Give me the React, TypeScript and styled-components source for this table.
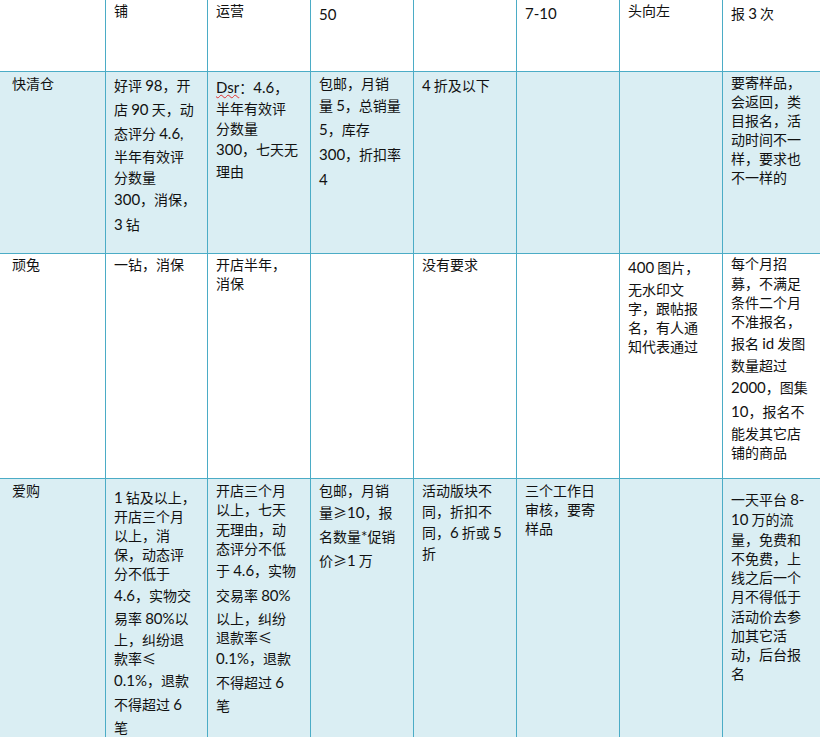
import React from 'react';
import styled, { createGlobalStyle } from 'styled-components';

const GlobalStyle = createGlobalStyle`
html, body {
  margin: 0;
  padding: 0;
  background: #ffffff;
  overflow: hidden;
}
`

const PageDiv = styled.div`
width: 820px;
height: 737px;
overflow: hidden;
background: #ffffff;
font-family: "Noto Sans CJK SC", "Noto Sans", sans-serif;
font-size: 14px;
color: #111;
`

const TableDiv = styled.div`
display: flex;
flex-direction: column;
width: 826px;
`

const RowDiv = styled.div<{ $h: number; $shade: boolean }>`
display: grid;
grid-template-columns: 106px 102px repeat(6, 103px);
height: ${p => p.$h}px;
background: ${p => (p.$shade ? '#daeef3' : '#ffffff')};
`

const CellDiv = styled.div<{ $first: boolean; $pt: number }>`
box-sizing: border-box;
border-right: 1px solid #4bacc6;
border-bottom: 1px solid #4bacc6;
padding: ${p => p.$pt}px 0 0 ${p => (p.$first ? 12 : 8)}px;
overflow: hidden;
`

const LineDiv = styled.div<{ $h: number }>`
height: ${p => p.$h}px;
line-height: ${p => p.$h}px;
white-space: nowrap;
`

const Latin = styled.span<{ $spell?: boolean }>`
font-family: Lato, "Liberation Sans", sans-serif;
font-size: 15px;
${p => p.$spell && `
  text-decoration: underline wavy #e03030;
  text-decoration-thickness: 1px;
  text-underline-offset: 1px;
`}
`

type Line = [string, number];
type Cell = { pt: number; lines: Line[] } | null;
type Row = { h: number; shade: boolean; cells: Cell[] };

const rows: Row[] = [
  {
    h: 72, shade: false, cells: [
      null,
      { pt: 0, lines: [["铺", 20]] },
      { pt: 0, lines: [["运营", 20]] },
      { pt: 0, lines: [["50", 28]] },
      null,
      { pt: 0, lines: [["7-10", 26]] },
      { pt: 0, lines: [["头向左", 20]] },
      { pt: 0, lines: [["报 3 次", 26]] },
    ]
  },
  {
    h: 182, shade: true, cells: [
      { pt: 1, lines: [["快清仓", 20]] },
      { pt: 1, lines: [["好评 98，开", 24], ["店 90 天，动", 24], ["态评分 4.6,", 24], ["半年有效评", 22], ["分数量", 21], ["300，消保，", 23], ["3 钻", 26]] },
      { pt: 4, lines: [["Dsr：4.6，", 22], ["半年有效评", 20], ["分数量", 20], ["300，七天无", 23], ["理由", 20]] },
      { pt: 0, lines: [["包邮，月销", 22], ["量 5，总销量", 22], ["5，库存", 26], ["300，折扣率", 24], ["4", 26]] },
      { pt: 1, lines: [["4 折及以下", 24]] },
      null,
      null,
      { pt: 1, lines: [["要寄样品，", 19], ["会返回，类", 19], ["目报名，活", 19], ["动时间不一", 19], ["样，要求也", 19], ["不一样的", 19]] },
    ]
  },
  {
    h: 225, shade: false, cells: [
      { pt: 0, lines: [["顽兔", 20]] },
      { pt: 0, lines: [["一钻，消保", 20]] },
      { pt: 0, lines: [["开店半年，", 20], ["消保", 19]] },
      null,
      { pt: 0, lines: [["没有要求", 20]] },
      null,
      { pt: 0, lines: [["400 图片，", 26], ["无水印文", 19], ["字，跟帖报", 19], ["名，有人通", 19], ["知代表通过", 19]] },
      { pt: 0, lines: [["每个月招", 19], ["募，不满足", 20], ["条件二个月", 19], ["不准报名，", 19], ["报名 id 发图", 24], ["数量超过", 21], ["2000，图集", 23], ["10，报名不", 25], ["能发其它店", 19], ["铺的商品", 19]] },
    ]
  },
  {
    h: 300, shade: true, cells: [
      { pt: 1, lines: [["爱购", 20]] },
      { pt: 8, lines: [["1 钻及以上，", 20], ["开店三个月", 19], ["以上，消", 19], ["保，动态评", 19], ["分不低于", 19], ["4.6，实物交", 24], ["易率 80%以", 23], ["上，纠纷退", 19], ["款率≤", 19], ["0.1%，退款", 24], ["不得超过 6", 25], ["笔", 20]] },
      { pt: 1, lines: [["开店三个月", 20], ["以上，七天", 19], ["无理由，动", 20], ["态评分不低", 19], ["于 4.6，实物", 24], ["交易率 80%", 26], ["以上，纠纷", 20], ["退款率≤", 19], ["0.1%，退款", 23], ["不得超过 6", 24], ["笔", 22]] },
      { pt: 1, lines: [["包邮，月销", 20], ["量≥10，报", 25], ["名数量*促销", 23], ["价≥1 万", 24]] },
      { pt: 1, lines: [["活动版块不", 20], ["同，折扣不", 22], ["同，6 折或 5", 20], ["折", 22]] },
      { pt: 1, lines: [["三个工作日", 20], ["审核，要寄", 19], ["样品", 19]] },
      null,
      { pt: 10, lines: [["一天平台 8-", 20], ["10 万的流", 20], ["量，免费和", 20], ["不免费，上", 19], ["线之后一个", 19], ["月不得低于", 19], ["活动价去参", 20], ["加其它活", 19], ["动，后台报", 19], ["名", 19]] },
    ]
  },
];

// latin runs get the western font, the rest stays in the CJK face
const renderText = (s: string) =>
  s.split(/([0-9A-Za-z.%*\-,]+)/).map((part, i) => {
    if (!part) return null;
    if (/^[0-9A-Za-z.%*\-,]+$/.test(part))
      return <Latin key={i} $spell={part === 'Dsr'}>{part}</Latin>;
    return <React.Fragment key={i}>{part}</React.Fragment>;
  });

function App() {
  return (
    <PageDiv>
      <GlobalStyle />
      <TableDiv>
        {rows.map((row, r) => (
          <RowDiv key={r} $h={row.h} $shade={row.shade}>
            {row.cells.map((cell, c) => (
              <CellDiv key={c} $first={c === 0} $pt={cell ? cell.pt : 0}>
                {cell && cell.lines.map(([text, h], i) => (
                  <LineDiv key={i} $h={h}>{renderText(text)}</LineDiv>
                ))}
              </CellDiv>
            ))}
          </RowDiv>
        ))}
      </TableDiv>
    </PageDiv>
  );
}

export default App;
